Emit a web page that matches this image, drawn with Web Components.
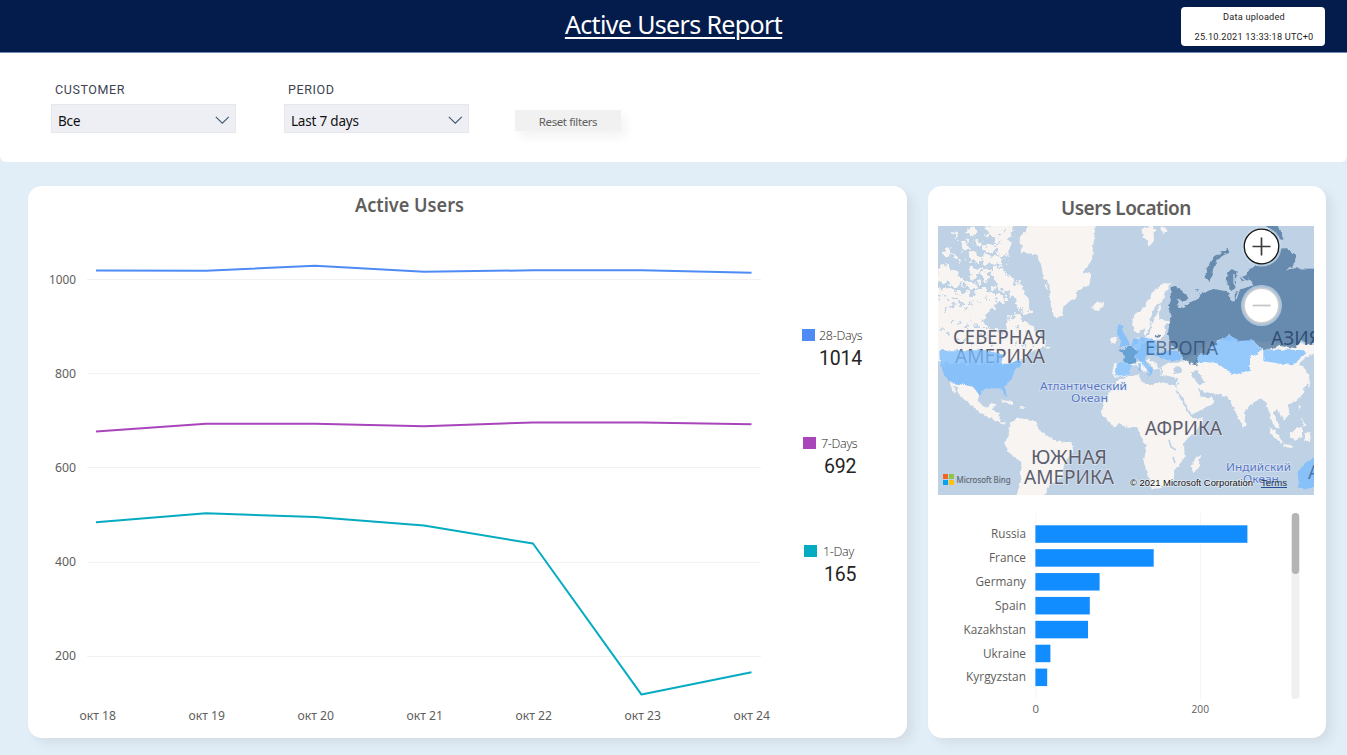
<!DOCTYPE html>
<html lang="en">
<head>
<meta charset="utf-8">
<title>Active Users Report</title>
<style>
html,body{margin:0;height:100%;overflow:hidden}
body{font-family:"Noto Sans","Open Sans",sans-serif;background:#e2eef7}
</style>
</head>
<body>
<users-report></users-report>
<script>
function define(name, html, setup) {
  const t = document.createElement('template');
  t.innerHTML = html;
  customElements.define(name, class extends HTMLElement {
    constructor() {
      super();
      this.attachShadow({mode: 'open'}).append(t.content.cloneNode(true));
    }
    connectedCallback() { if (setup) setup(this, this.shadowRoot); }
  });
}

define('report-header', `<style>
:host{display:grid;grid-template-columns:1fr auto 1fr;height:52px;background:#041c4b;border-bottom:1px solid #7088b5;color:#fff;box-sizing:content-box}
h1{grid-column:2;margin:0;font:400 25px/48px "Noto Sans",sans-serif;letter-spacing:-.64px;text-decoration:underline;text-decoration-thickness:2px;text-underline-offset:3px;white-space:nowrap}
.stamp{justify-self:end;box-sizing:border-box;margin:7px 22px 0 0;padding-left:2px;width:144px;height:39px;border-radius:4px;background:#fff;color:#252423;text-align:center;font:400 9.2px/20px Roboto,sans-serif;letter-spacing:.2px;white-space:nowrap}
</style><h1><slot></slot></h1><div class="stamp"><slot name="label"></slot><br><slot name="time"></slot></div>`);

define('filter-select', `<style>
:host{display:block;width:185px}
label{display:block;height:22px;margin-bottom:4px;padding-left:4px;font:400 12.5px/24px Roboto,sans-serif;letter-spacing:.6px;color:#3d4354}
.box{box-sizing:border-box;height:29px;border:1px solid #e8e8ea;background:#eeeff4;display:flex;align-items:center;justify-content:space-between;padding:5px 5px 0 6px;font-size:13.5px;letter-spacing:-.2px;color:#111}
svg{display:block;margin-top:-3px}
</style><label><slot name="label"></slot></label><div class="box"><span><slot></slot></span><svg width="16" height="10" fill="none" stroke="#3e5a70" stroke-width="1.1"><path d="M1.8 1.8 8.3 8.2 14.8 1.8"/></svg></div>`);

define('reset-button', `<style>
:host{display:block;width:106px;height:21px;background:#f1f1f1;box-shadow:5px 6px 11px rgba(0,0,0,.05);text-align:center;font:400 11.5px/24px "Noto Sans",sans-serif;letter-spacing:-.4px;color:#605e5c}
</style><slot></slot>`);

define('filter-bar', `<style>
:host{display:flex;box-sizing:border-box;height:109px;padding:25px 0 0 51px;gap:48px;background:#fff;border-radius:0 0 6px 6px}
reset-button{margin:32px 0 0 -2px}
</style>
<filter-select><span slot="label">CUSTOMER</span>Все</filter-select>
<filter-select><span slot="label">PERIOD</span>Last 7 days</filter-select>
<reset-button>Reset filters</reset-button>`);

define('report-card', `<style>
:host{display:flex;flex-direction:column;box-sizing:border-box;height:552px;background:#fff;border-radius:14px;box-shadow:7px 6px 12px rgba(0,0,0,.055),3px 3px 7px rgba(0,0,0,.02)}
</style><slot></slot>`);

define('line-chart', `<style>
:host{display:block}svg{display:block}text{font-family:"Noto Sans",sans-serif;font-size:12px;fill:#605e5c}
.t{font-size:19px;font-weight:600}
</style><svg width="752" height="552" viewBox="28 186 752 552">
<text class="t" x="355" y="212" textLength="109" lengthAdjust="spacingAndGlyphs">Active Users</text>
<g id="grid" stroke="#f2f2f2" stroke-width="1"></g><g id="labels"></g>
<g fill="none" stroke-width="2" stroke-linejoin="round">
<path stroke="#4f8bf5" d="M96 270.4 206 270.8 315 265.8 424 271.8 533 270.3H642L751.5 272.8"/>
<path stroke="#a845bb" d="M96 431.4 206 423.8H315L424 426.2 533 422.4H642L751.5 424.3"/>
<path stroke="#05abc0" d="M96 522.2 206 513.3 315 517 424 525.6 533 543.5 641.5 694.6 751.5 672.2"/>
</g></svg>`, (el, root) => {
  let g = '', l = '';
  [1000, 800, 600, 400, 200].forEach((v, i) => {
    const y = 279.7 + i * 94.1, w = v === 1000 ? 27 : 21;
    g += `<path d="M87 ${Math.floor(y) + .5}H761"/>`;
    l += `<text x="${76 - w}" y="${y + 4.3}" textLength="${w}" lengthAdjust="spacingAndGlyphs">${v}</text>`;
  });
  for (let i = 0; i < 7; i++) l += `<text x="${79.5 + i * 109}" y="720" textLength="36.5" lengthAdjust="spacingAndGlyphs">окт ${18 + i}</text>`;
  root.getElementById('grid').innerHTML = g;
  root.getElementById('labels').innerHTML = l;
});

define('metric-item', `<style>
:host{display:block;height:108px;color:#252423}
.k{display:flex;align-items:center;height:18px;gap:4px;font:300 12.5px/18px "Open Sans",sans-serif;letter-spacing:-.3px;white-space:nowrap}
.k span{padding-left:var(--gap,0);position:relative;top:1px}
i{width:13px;height:12px;background:var(--c)}
b{display:block;font:400 19.5px/30px Roboto,sans-serif;letter-spacing:-.2px;margin-left:17px;padding-left:var(--in,0)}
</style><div class="k"><i></i><span><slot></slot></span></div><b><slot name="value"></slot></b>`);

define('metric-list', `<style>
:host{display:block;padding-top:140px;margin-left:22px}
</style>
<metric-item style="--c:#4f8bf5">28-Days<span slot="value">1014</span></metric-item>
<metric-item style="--c:#a845bb;padding-left:1px;--in:4px;--gap:1px">7-Days<span slot="value">692</span></metric-item>
<metric-item style="--c:#05abc0;padding-left:2px;--in:3px;--gap:2px">1-Day<span slot="value">165</span></metric-item>`);

define('world-map', `<style>
:host{display:block;width:376px;height:269px;margin-left:10px}svg{display:block}
text{font-family:"Noto Sans",sans-serif}
.c text{font-size:19px;fill:#5c5d6d;stroke:#f4f3f5;stroke-width:1.4px;stroke-opacity:.55;paint-order:stroke}
.c.dark text{stroke:none;fill:#1d3a5f;fill-opacity:.75}
.o text{font-size:11.5px;fill:#5878c4;stroke:#e4ecf8;stroke-width:1.6px;stroke-opacity:.7;paint-order:stroke}
</style>
<svg width="376" height="269" viewBox="938 226 376 269">
<defs>
<filter id="rag" x="-5%" y="-5%" width="110%" height="110%" color-interpolation-filters="sRGB"><feTurbulence type="fractalNoise" baseFrequency=".22" numOctaves="2" seed="7"/><feDisplacementMap in="SourceGraphic" scale="4" xChannelSelector="R" yChannelSelector="G"/><feGaussianBlur stdDeviation=".35"/></filter>
<filter id="rag2" x="-5%" y="-5%" width="110%" height="110%" color-interpolation-filters="sRGB"><feTurbulence type="fractalNoise" baseFrequency=".17" numOctaves="3" seed="4"/><feDisplacementMap in="SourceGraphic" scale="12" xChannelSelector="R" yChannelSelector="G"/><feGaussianBlur stdDeviation=".5"/></filter>
</defs>
<rect x="938" y="226" width="376" height="269" fill="#bed1e5"/>
<g filter="url(#rag2)"><g transform="translate(930 220) scale(.33333)">
<g fill="#f7f4f2">
<path d="M0 205 60 205 90 220 130 222 150 205 185 212 200 235 192 264 165 285 162 320 195 330 225 350 238 290 262 285 280 305 300 315 320 335 345 362 350 385 300 392 265 430 0 430Z"/>
<path d="M182 140 215 142 228 165 250 178 272 195 290 225 302 270 288 285 262 262 255 235 225 215 205 205 190 180Z"/>
<path d="M22 140 52 132 72 155 104 182 75 200 50 185 22 185ZM38 90 60 80 65 105 45 112ZM85 60 112 62 120 88 95 92ZM68 100 88 105 75 118ZM115 92 148 100 155 130 125 128ZM165 10 255 10 245 45 225 70 200 60 170 45ZM195 68 240 62 235 104 200 100ZM155 72 195 78 188 100 158 97ZM155 106 225 108 222 134 160 132ZM158 142 177 145 172 185 160 180ZM115 145 150 145 150 170 120 175ZM112 25 140 28 132 45 112 42ZM200 215 225 225 232 245 212 250 200 240ZM100 180 155 190 135 212 105 205ZM185 195 200 200 190 212ZM130 55 155 60 140 78ZM68 35 84 40 76 52ZM86 118 100 124 92 135Z"/></g>
<g fill="none" stroke="#bed1e5" stroke-width="7" stroke-dasharray="9 17"><path d="M20 235 70 230 110 255 170 235M40 270 90 250 120 290 150 330M60 300 100 310 130 345 180 350M30 330 90 360 150 375 200 370M260 320 290 340 320 370M240 350 270 380 310 375M205 45 230 30"/></g>
</g></g>
<g filter="url(#rag)"><g transform="translate(930 220) scale(.33333)" fill="#f7f4f2">
<path d="M298 8 285 35 264 55 276 75 272 97 318 103 332 130 342 175 358 190 360 240 366 280 378 293 396 288 400 260 440 228 443 212 478 195 484 162 460 155 486 120 490 70 498 8Z"/>
<path d="M345 195 352 190 352 205 345 207ZM486 258 505 242 522 250 519 264 500 272ZM543 358 560 350 560 366 545 371Z"/>
<path d="M60 487 130 500 148 525 142 542 165 562 188 548 196 553 186 572 210 580 208 602 228 608 222 614 200 602 158 583 130 562 112 545 92 530 80 505 66 497 80 520 75 521 63 500ZM216 540 250 547 248 555 220 548ZM268 558 292 560 275 567Z"/>
<path d="M240 610 262 593 290 600 318 604 335 640 375 660 425 670 430 690 403 730 395 775 358 795 340 832 258 832 272 785 274 725 250 710 234 690 222 668 235 650Z"/>
<path d="M722 186 695 195 668 215 654 245 634 270 609 285 607 315 620 342 641 325 647 350 658 340 666 318 658 300 672 268 690 246 696 258 686 275 688 296 706 303 728 303 712 312 702 318 706 340 694 358 650 364 640 372 630 352 622 355 622 370 600 385 570 392 582 405 583 427 552 430 546 465 565 472 588 467 608 440 625 425 640 423 663 448 670 446 650 420 656 415 680 432 690 458 700 462 694 440 715 428 745 428 800 400 840 360 900 360 1160 375 1160 400 1135 406 1108 430 1128 450 1130 485 1115 530 1075 555 1078 582 1062 602 1040 566 1032 580 1048 618 1040 627 1020 592 1010 550 992 534 960 555 942 577 946 602 932 606 906 556 890 528 820 515 804 503 812 530 848 532 850 550 785 584 755 530 738 505 744 475 692 463 690 445 640 455 610 430Z"/>
<path d="M560 480 600 467 627 464 634 485 670 496 690 485 734 496 745 525 770 570 785 594 820 596 806 620 762 668 764 714 736 747 730 776 693 804 665 808 655 775 641 725 650 675 630 645 622 622 590 620 570 612 550 620 515 583 520 545 540 515Z"/>
<path d="M810 704 806 742 790 760 784 740 795 716ZM635 25 660 18 680 28 671 40 672 62 656 82 650 60 638 50ZM690 24 705 22 714 34 700 38ZM936 600 946 603 946 620 936 614ZM1016 620 1035 635 1058 665 1055 672 1028 646ZM1080 640 1102 625 1117 620 1114 652 1095 662 1078 650ZM1060 672 1090 676 1089 684 1060 680ZM1126 640 1142 636 1140 667 1122 662ZM1102 557 1115 555 1107 570ZM1112 590 1130 620 1120 619ZM1130 455 1142 480 1137 507 1126 470Z"/>
</g></g>
<g filter="url(#rag)"><path d="M1174 369 1178 366 1183 369 1181 373 1173 374ZM1191 372 1195 370 1202 376 1205 383 1200 385 1195 379Z" fill="#bed1e5"/></g>
<g fill="none" stroke="#bed1e5" stroke-width="1.6"><path d="M1169 440 1171 447 1176 450M1173 457 1175 463"/></g>
<g class="c"><text x="953" y="344" textLength="93" lengthAdjust="spacingAndGlyphs">СЕВЕРНАЯ</text><text x="955" y="363" textLength="90" lengthAdjust="spacingAndGlyphs">АМЕРИКА</text>
<text x="1145" y="435" textLength="77" lengthAdjust="spacingAndGlyphs">АФРИКА</text><text x="1031" y="463.5" textLength="76" lengthAdjust="spacingAndGlyphs">ЮЖНАЯ</text><text x="1024" y="484" textLength="90" lengthAdjust="spacingAndGlyphs">АМЕРИКА</text></g>
<g class="o"><text x="1040" y="390" textLength="87" lengthAdjust="spacingAndGlyphs">Атлантический</text><text x="1071" y="402" textLength="37" lengthAdjust="spacingAndGlyphs">Океан</text><text x="1226" y="471" textLength="65" lengthAdjust="spacingAndGlyphs">Индийский</text><text x="1243" y="483" textLength="36" lengthAdjust="spacingAndGlyphs">Океан</text></g>
<g filter="url(#rag)"><g transform="translate(930 220) scale(.33333)">
<g fill="#76bbff" fill-opacity=".76">
<path d="M28 391 170 391 200 398 220 400 214 431 236 431 274 417 272 430 250 460 247 475 226 497 229 527 221 523 212 505 165 505 148 525 130 500 60 485 42 465 30 430Z"/>
<path d="M564 316 580 317 578 338 590 350 600 374 568 384 574 362 560 340ZM557 432 580 426 609 437 592 463 565 470 555 460ZM603 377 612 357 650 353 680 364 676 396 740 392 765 412 725 425 690 412 660 404 645 410 650 430 668 450 664 464 625 418 613 410 625 395ZM625 430 633 430 632 455 625 453ZM645 460 660 462 658 470Z"/>
<path d="M834 378 895 346 930 360 970 360 998 390 985 400 960 412 960 450 910 465 862 430 815 425 790 432 805 405 836 400ZM1000 388 1120 390 1130 398 1115 412 1088 436 1040 430 1000 422ZM1160 705 1130 728 1102 752 1108 806 1130 808 1160 797ZM745 487 748 488 746 500Z"/></g>
<path fill="#5a9bd2" fill-opacity=".93" d="M568 393 600 378 625 395 615 410 622 425 603 433 582 427 584 405Z"/>
<g fill="#567da3" fill-opacity=".84"><path d="M722 202 736 197 768 222 776 238 762 244 740 236 748 260 762 264 780 246 805 238 812 222 850 206 880 212 896 220 902 243 915 240 914 220 924 210 965 198 968 188 952 170 955 150 985 132 1000 105 1022 88 1065 85 1100 105 1090 135 1068 152 1090 145 1160 146 1160 375 1112 362 1098 385 1050 378 1000 390 970 360 930 362 898 345 860 362 862 378 834 378 840 400 805 405 802 440 760 420 750 392 724 375 714 340 722 290 714 260 722 240ZM676 344 690 344 690 352 676 352ZM795 208 804 208 802 216ZM929 172 950 166 958 180 936 184Z"/>
<path d="M892 155 905 148 920 150 916 208 904 213 890 190ZM1012 10 1045 14 1062 60 1048 58 1005 15ZM894 86 898 98 870 110 850 145 845 168 838 186 824 172 832 145 852 112Z"/></g></g></g>
<g class="c dark"><text x="1145" y="355" textLength="73" lengthAdjust="spacingAndGlyphs" style="fill-opacity:.62">ЕВРОПА</text><text x="1271" y="345" textLength="50" lengthAdjust="spacingAndGlyphs">АЗИЯ</text><text x="1308" y="479" style="fill:#365d85">А</text></g>
<g fill="none" stroke="#bed1e5" stroke-width="1.4"><path d="M1234 274 1234 283 1239 290 1236 299M1237 274 1246 281"/></g>
<g><circle cx="1261.5" cy="246.5" r="20" fill="#c7dbec" fill-opacity=".75"/><circle cx="1261.5" cy="246.5" r="17.3" fill="#fff" stroke="#171717" stroke-width="1.3"/><path d="M1252.5 246.5h18M1261.5 237.5v18" stroke="#3c3c3c" stroke-width="1.7"/>
<circle cx="1261.5" cy="305.5" r="20.5" fill="#b7cde0" fill-opacity=".85"/><circle cx="1261.5" cy="305.5" r="17.3" fill="#fff" stroke="#cfcfcf" stroke-width="1.6"/><path d="M1252.5 305.5h18" stroke="#c4c4c4" stroke-width="1.7"/></g>
<path fill="#f26522" d="M943 474h5v5h-5z"/><path fill="#8dc63f" d="M949 474h5v5h-5z"/><path fill="#00a4ef" d="M943 480h5v5h-5z"/><path fill="#ffc20e" d="M949 480h5v5h-5z"/>
<text x="956.5" y="483" font-size="9" fill="#666b75" stroke="#666b75" stroke-width=".2" textLength="54" lengthAdjust="spacingAndGlyphs">Microsoft Bing</text>
<g style="font-size:9px" fill="#111"><text x="1130" y="486" textLength="123" lengthAdjust="spacingAndGlyphs" style="font-family:'Liberation Sans',sans-serif;stroke:#fff;stroke-width:1.5px;stroke-opacity:.5;paint-order:stroke">© 2021 Microsoft Corporation</text><text x="1261" y="486" textLength="26" lengthAdjust="spacingAndGlyphs" style="font-family:'Liberation Sans',sans-serif;fill:#26344f">Terms</text><path d="M1261 487.5h26" stroke="#2c4d94"/></g>
</svg>`);

define('bar-chart', `<style>
:host{display:block}svg{display:block}text{font-family:"Open Sans","Noto Sans",sans-serif;font-size:12px;fill:#605e5c}
</style><svg width="398" height="240" viewBox="928 495 398 240">
<path d="M1036 513V699M1200.5 513V699" stroke="#f5f5f5"/>
<g id="bars"></g>
<text x="1032.5" y="713" textLength="6.5" lengthAdjust="spacingAndGlyphs" style="font-size:10.5px">0</text><text x="1191.5" y="713" textLength="17.5" lengthAdjust="spacingAndGlyphs" style="font-size:10.5px">200</text>
<rect x="1291.5" y="513" width="8" height="186" rx="4" fill="#f0f0f0"/><rect x="1291.8" y="513" width="7.4" height="61" rx="3.7" fill="#b4b4b4"/>
</svg>`, (el, root) => {
  root.getElementById('bars').innerHTML = [['Russia', 35, 212], ['France', 37, 118.3], ['Germany', 50.5, 64.2], ['Spain', 31, 54.4], ['Kazakhstan', 62.5, 52.6], ['Ukraine', 43, 15], ['Kyrgyzstan', 60, 11.8]].map(([n, tw, w], i) =>
    `<rect x="1035.4" y="${525.3 + i * 23.88}" width="${w}" height="17.5" fill="#118dff"/><text x="${1026 - tw}" y="${538.2 + i * 23.88}" textLength="${tw}" lengthAdjust="spacingAndGlyphs">${n}</text>`).join('');
});

define('users-report', `<style>
:host{display:block;height:755px;overflow:hidden}
main{display:grid;grid-template-columns:879px 398px;gap:21px;padding:24px 0 0 28px}
.row{display:flex}
h2{box-sizing:border-box;margin:0;height:40px;padding:0 2px 0 0;text-align:center;font:600 19px/44px "Noto Sans",sans-serif;letter-spacing:-.5px;color:#605e5c}
</style>
<report-header>Active Users Report<span slot="label">Data uploaded</span><span slot="time">25.10.2021 13:33:18 UTC+0</span></report-header>
<filter-bar></filter-bar>
<main>
<report-card><div class="row"><line-chart></line-chart><metric-list></metric-list></div></report-card>
<report-card><h2>Users Location</h2><world-map></world-map><bar-chart></bar-chart></report-card>
</main>`);
</script>
</body>
</html>
